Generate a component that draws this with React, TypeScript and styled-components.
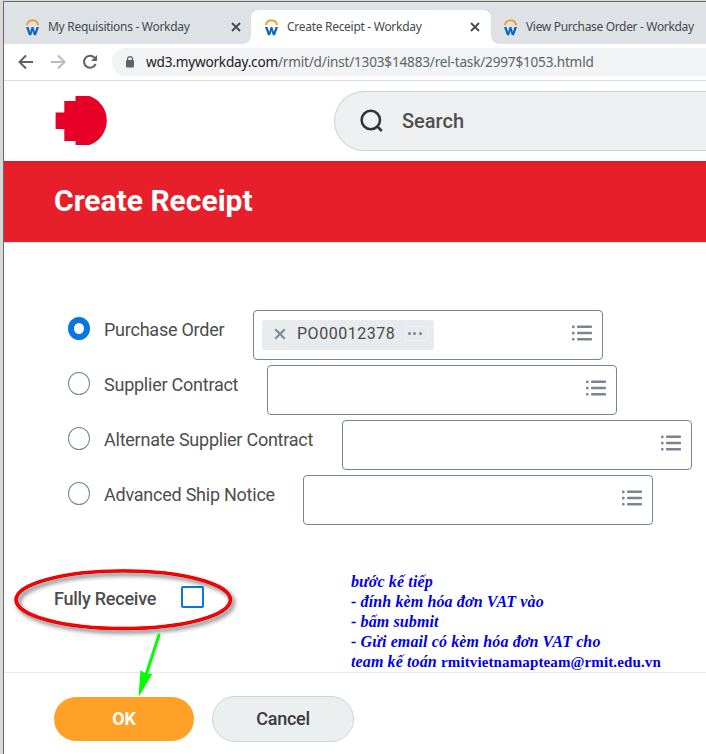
import React from "react";
import styled, { createGlobalStyle } from "styled-components";

const GlobalStyle = createGlobalStyle`
  * { box-sizing: border-box; }
  body { margin: 0; background: #d7d7d5; overflow: hidden; }
`;

const Frame = styled.div`
  position: relative;
  width: 706px;
  height: 754px;
  padding: 1px 0 0 3px;
  background: #d9d9d7;
  font-family: Roboto, "Liberation Sans", sans-serif;
  overflow: hidden;
`;

const BrowserWindow = styled.div`
  height: 753px;
  border-top: 1px solid #696969;
  border-left: 1px solid #696969;
  background: #fff;
  display: flex;
  flex-direction: column;
`;

const TabStrip = styled.div`
  height: 42px;
  flex: none;
  padding-top: 8px;
  display: flex;
  background: #dee1e6;
  overflow: hidden;
`;

const Tab = styled.div<{ $width: number; $active?: boolean; $inset: number }>`
  position: relative;
  flex: none;
  width: ${(p) => p.$width}px;
  height: 34px;
  padding: 0 ${(p) => (p.$active ? 11 : 10)}px 0 ${(p) => p.$inset}px;
  display: flex;
  align-items: center;
  border-radius: 8px 8px 0 0;
  background: ${(p) => (p.$active ? "#fff" : "transparent")};
  color: #45494d;

  &::before, &::after {
    content: "";
    display: ${(p) => (p.$active ? "block" : "none")};
    position: absolute;
    bottom: 0;
    width: 8px;
    height: 8px;
  }
  &::before { left: -8px; background: radial-gradient(circle at 0 0, transparent 7.5px, #fff 8px); }
  &::after { right: -8px; background: radial-gradient(circle at 100% 0, transparent 7.5px, #fff 8px); }
`;

const TabTitle = styled.span<{ $spacing: number }>`
  flex: 1;
  margin-left: 9px;
  font: 12px/16px "Noto Sans", sans-serif;
  letter-spacing: ${(p) => p.$spacing}px;
  white-space: nowrap;
`;

const AddressRow = styled.div`
  height: 37px;
  flex: none;
  display: flex;
  align-items: center;
  border-bottom: 1px solid #dadce0;
  padding-left: 14px;
`;

const NavButton = styled.span`
  width: 32px;
  height: 18px;
  flex: none;
  display: block;
`;

const AddressBar = styled.div`
  flex: 1;
  height: 28px;
  margin-left: -2px;
  padding-left: 13px;
  display: flex;
  align-items: center;
  border-radius: 14px 0 0 14px;
  background: #f1f3f4;
`;

const Url = styled.span`
  margin-left: 11px;
  font: 13.6px/20px "Noto Sans", sans-serif;
  letter-spacing: -0.2px;
  color: #5f6368;
  white-space: nowrap;
  b { font-weight: 400; color: #202124; }
`;

const SiteHeader = styled.div`
  height: 80px;
  flex: none;
  display: flex;
  align-items: center;
  padding-left: 51px;
  > svg { margin-bottom: 1px; }
`;

const SearchBox = styled.div`
  flex: 1;
  height: 60px;
  margin-left: 226px;
  padding-left: 25px;
  display: flex;
  align-items: center;
  border: 1px solid #ced3d9;
  border-right: 0;
  border-radius: 30px 0 0 30px;
  background: #eff0f2;
  font-size: 20px;
  font-weight: 500;
  color: #4f4f4f;
  span { margin-left: 18px; }
`;

const Banner = styled.h1`
  height: 81px;
  flex: none;
  margin: 0;
  padding: 0 0 2px 50px;
  display: flex;
  align-items: center;
  background: linear-gradient(#c81f29, #dd1f29 2px, #e61f2a 5px) #e61f2a;
  color: #fff;
  font-size: 30px;
  font-weight: 700;
  box-shadow: 0 1px 0 #e3e5e6;
`;

const Form = styled.div`
  flex: 1;
  padding-top: 68px;
  color: #4d4d4d;
`;

const OptionRow = styled.label`
  height: 50px;
  margin: 0 0 5px 64px;
  display: flex;
  align-items: flex-start;
  font-size: 18px;
`;

const Radio = styled.span<{ $checked?: boolean }>`
  flex: none;
  width: 22px;
  height: 23px;
  margin-top: 7px;
  border-radius: 50%;
  border: ${(p) => (p.$checked ? "6px solid #0875e1" : "1px solid #7b8591")};
  background: #fff;
`;

const OptionText = styled.span<{ $width: number }>`
  width: ${(p) => p.$width}px;
  flex: none;
  margin-left: 14px;
  line-height: 40px;
  letter-spacing: -0.24px;
  white-space: nowrap;
`;

const Prompt = styled.span`
  width: 350px;
  height: 50px;
  flex: none;
  padding: 0 8px 4px 8px;
  display: flex;
  align-items: center;
  border: 1px solid #7b8591;
  border-radius: 4px;
  background: #fff;
  > svg { margin-left: auto; }
`;

const Pill = styled.span`
  height: 30px;
  width: 172px;
  margin-top: 3px;
  padding: 0 5px 2px 12px;
  display: flex;
  align-items: center;
  border-radius: 3px;
  background: #e8ebed;
  color: #494949;
  font-size: 16px;
  > svg { margin-top: 1px; }
  span { margin-left: 11px; letter-spacing: 0.52px; flex: 1; }
`;

const RelatedActions = styled.i`
  width: 24px;
  height: 15px;
  display: flex;
  align-items: center;
  justify-content: center;
  padding-right: 5px;
  border: 1px solid #f0f2f3;
  border-radius: 2px;
  &::before {
    content: "";
    width: 3px;
    height: 3px;
    margin-right: 10px;
    border-radius: 50%;
    background: #7b8591;
    box-shadow: 5px 0 #7b8591, 11px 0 #7b8591;
  }
`;

const CheckRow = styled.label`
  height: 24px;
  margin: 60px 0 0 50px;
  display: flex;
  align-items: center;
  font-size: 18px;
  font-weight: 500;
`;

const LabelText = styled.span`
  width: 127px;
  padding-top: 3px;
  letter-spacing: -0.24px;
`;

const Checkbox = styled.span`
  width: 23px;
  height: 22px;
  margin-bottom: 1px;
  border: 2px solid #0875e1;
  border-radius: 2px;
  background: #fff;
`;

const Footer = styled.div`
  height: 82px;
  flex: none;
  padding: 23px 0 0 50px;
  display: flex;
  align-items: flex-start;
  gap: 18px;
  border-top: 1px solid #e8eaeb;
`;

const Button = styled.button<{ $primary?: boolean }>`
  width: ${(p) => (p.$primary ? 140 : 142)}px;
  height: ${(p) => (p.$primary ? 44 : 46)}px;
  margin-top: ${(p) => (p.$primary ? 1 : 0)}px;
  padding: 0 0 2px 0;
  border: ${(p) => (p.$primary ? "0" : "1px solid #ced3d9")};
  border-radius: 23px;
  background: ${(p) => (p.$primary ? "#ffa126" : "#ebeff0")};
  color: ${(p) => (p.$primary ? "#fff" : "#3a3a3a")};
  font: ${(p) => (p.$primary ? 700 : 500)} 18px Roboto, sans-serif;
  letter-spacing: -0.25px;
`;

const Markup = styled.svg`
  position: absolute;
  left: 0;
  top: 560px;
`;

const Note = styled.p`
  position: absolute;
  left: 351px;
  top: 572px;
  margin: 0;
  color: #0000e8;
  font: italic bold 16px/20px "Liberation Serif", serif;
  letter-spacing: 0.12px;
  white-space: nowrap;
  b { font-style: normal; font-size: 15px; }
`;

const NoteLine = styled.span`
  display: block;
`;

const WorkdayIcon = () => (
  <svg width="13" height="17" viewBox="0 0 13 17" fill="none">
    <path d="M.9 6.2C1.8-.3 11.2-.3 12.1 6.2" stroke="#f7981d" strokeWidth="1.9" />
    <path
      d="M0 8h2.5l1.7 4.9L5.6 8h1.8l1.4 4.9L10.5 8H13l-3 8.3H7.8L6.5 12.1 5.2 16.3H3z"
      fill="#0b66c0"
    />
  </svg>
);

const CloseIcon = ({ size, color, weight }: { size: number; color: string; weight: number }) => (
  <svg width={size} height={size} viewBox="0 0 10 10">
    <path d="m1 1 8 8M9 1 1 9" stroke={color} strokeWidth={weight} />
  </svg>
);

const ArrowIcon = ({ forward }: { forward?: boolean }) => (
  <svg width="18" height="18" viewBox="0 0 18 18" fill="none" stroke={forward ? "#b9bbbe" : "#5f6368"} strokeWidth="2">
    <path d={forward ? "M1 9h13M8 2.5 14.5 9 8 15.5" : "M15 9H2M8 2.5 1.5 9 8 15.5"} />
  </svg>
);

const ListIcon = () => (
  <svg width="22" height="18" viewBox="0 0 22 18" fill="#7b8591">
    {[1.6, 7.8, 14].map((y) => (
      <g key={y}>
        <rect x="0" y={y} width="2.6" height="2.6" rx="1" />
        <rect x="5" y={y} width="15" height="2.5" rx=".8" />
      </g>
    ))}
  </svg>
);

const options = [
  { label: "Purchase Order", width: 149, value: "PO00012378" },
  { label: "Supplier Contract", width: 163 },
  { label: "Alternate Supplier Contract", width: 238 },
  { label: "Advanced Ship Notice", width: 199 },
];

export default function App() {
  return (
    <Frame>
      <GlobalStyle />
      <BrowserWindow>
        <TabStrip>
          <Tab $width={247} $inset={22}>
            <WorkdayIcon />
            <TabTitle $spacing={-0.29}>My Requisitions - Workday</TabTitle>
            <CloseIcon size={10} color="#45494d" weight={1.8} />
          </Tab>
          <Tab $width={240} $inset={14} $active>
            <WorkdayIcon />
            <TabTitle $spacing={-0.29}>Create Receipt - Workday</TabTitle>
            <CloseIcon size={10} color="#45494d" weight={1.8} />
          </Tab>
          <Tab $width={240} $inset={13}>
            <WorkdayIcon />
            <TabTitle $spacing={-0.33}>View Purchase Order - Workday</TabTitle>
          </Tab>
        </TabStrip>
        <AddressRow>
          <NavButton><ArrowIcon /></NavButton>
          <NavButton><ArrowIcon forward /></NavButton>
          <NavButton>
            <svg width="18" height="18" viewBox="0 0 18 18" fill="none">
              <path d="M13.6 11A6 6 0 1 1 12.5 4.7L14 6.2" stroke="#5f6368" strokeWidth="2" />
              <path d="M15 2v6H9z" fill="#5f6368" />
            </svg>
          </NavButton>
          <AddressBar>
            <svg width="10" height="12" viewBox="0 0 10 12">
              <rect x="1" y="4" width="8" height="7.5" rx="1" fill="#5f6368" />
              <path d="M2.6 5V3a2.4 2.4 0 0 1 4.8 0v2" fill="none" stroke="#5f6368" strokeWidth="1.2" />
            </svg>
            <Url><b>wd3.myworkday.com</b>/rmit/d/inst/1303$14883/rel-task/2997$1053.htmld</Url>
          </AddressBar>
        </AddressRow>
        <SiteHeader>
          <svg width="53" height="49" viewBox="0 0 53 49" fill="#e60028">
            <path d="M20.5 0h14A26 26 0 0 1 34.5 49h-14v-4H9.3V33H.6V16.5h8.7V5h11.2z" />
          </svg>
          <SearchBox>
            <svg width="24" height="24" viewBox="0 0 24 24" fill="none" stroke="#333" strokeWidth="2.5">
              <circle cx="10.8" cy="11" r="9.2" />
              <path d="m16.8 17 5 5" />
            </svg>
            <span>Search</span>
          </SearchBox>
        </SiteHeader>
        <Banner>Create Receipt</Banner>
        <Form>
          {options.map((o) => (
            <OptionRow key={o.label}>
              <Radio $checked={!!o.value} />
              <OptionText $width={o.width}>{o.label}</OptionText>
              <Prompt>
                {o.value && (
                  <Pill>
                    <CloseIcon size={12} color="#7b8591" weight={1.6} />
                    <span>{o.value}</span>
                    <RelatedActions />
                  </Pill>
                )}
                <ListIcon />
              </Prompt>
            </OptionRow>
          ))}
          <CheckRow>
            <LabelText>Fully Receive</LabelText>
            <Checkbox />
          </CheckRow>
        </Form>
        <Footer>
          <Button $primary>OK</Button>
          <Button>Cancel</Button>
        </Footer>
      </BrowserWindow>

      <Markup width="250" height="145" viewBox="0 560 250 145" fill="none">
        <defs>
          <filter id="shadow" x="-10%" y="-20%" width="120%" height="150%">
            <feDropShadow dx="2.5" dy="3" stdDeviation="2" floodColor="#222" floodOpacity=".65" />
          </filter>
        </defs>
        <g filter="url(#shadow)">
          <ellipse cx="123.2" cy="599.7" rx="107.2" ry="28.8" stroke="#b00" strokeWidth="3.4" />
          <ellipse cx="123.2" cy="599.7" rx="107.2" ry="28.8" stroke="#f00" strokeWidth="2.4" />
        </g>
        <path d="M159 635 145 678" stroke="#0f0" strokeWidth="3" strokeLinecap="round" />
        <path d="M138.5 697 140.5 670 146 674 152.5 673.5z" fill="#0f0" />
      </Markup>
      <Note>
        <NoteLine>bước kế tiếp</NoteLine>
        <NoteLine>- đính kèm hóa đơn VAT vào</NoteLine>
        <NoteLine>- bấm submit</NoteLine>
        <NoteLine>- Gửi email có kèm hóa đơn VAT cho</NoteLine>
        <NoteLine>team kế toán <b>rmitvietnamapteam@rmit.edu.vn</b></NoteLine>
      </Note>
    </Frame>
  );
}
